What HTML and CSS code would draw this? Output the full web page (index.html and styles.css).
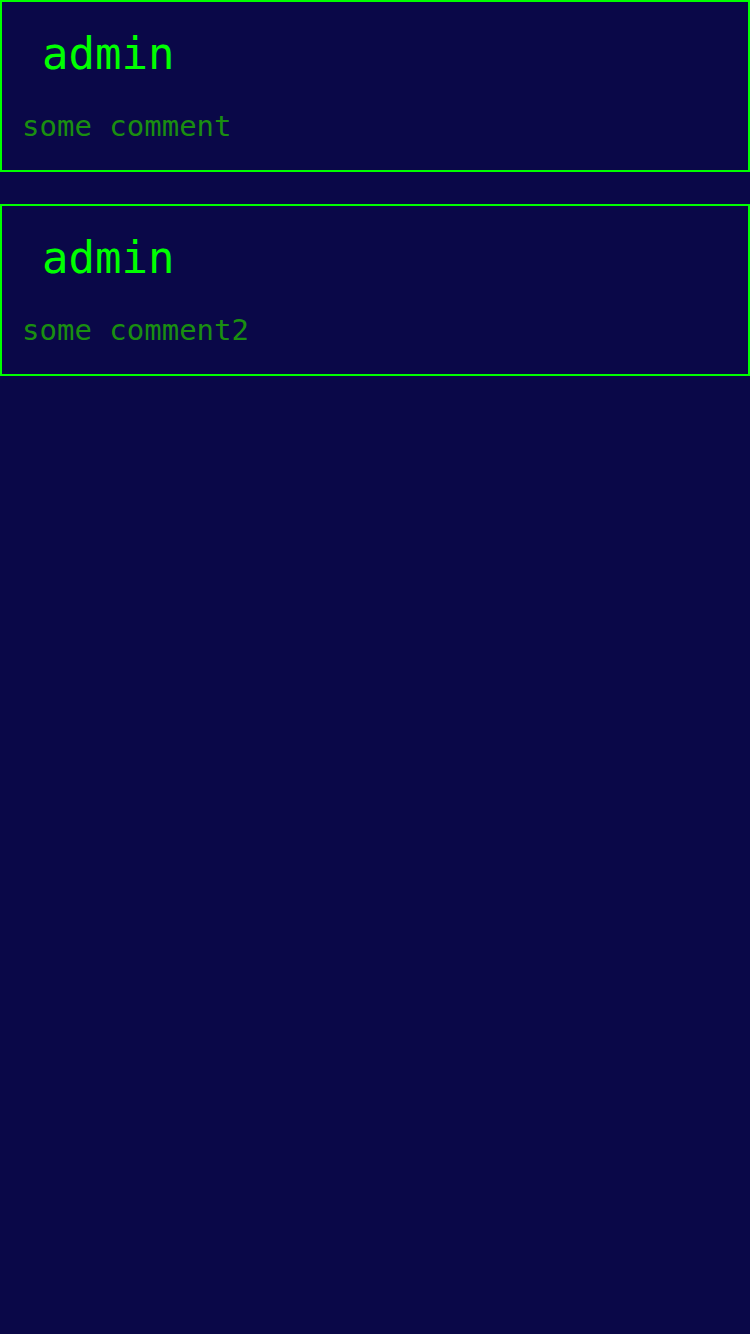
FILE: index.html
```html
<!DOCTYPE html>
<html>
<head>
<meta charset="utf-8">
<link rel="stylesheet" href="styles.css">
</head>
<body>
<div class="list">
  <div class="card">
    <div class="author">admin</div>
    <div class="comment">some comment</div>
  </div>
  <div class="card">
    <div class="author">admin</div>
    <div class="comment">some comment2</div>
  </div>
</div>
</body>
</html>
```
FILE: styles.css
```css
html, body {
  margin: 0;
  padding: 0;
  background: #0a0848;
  min-height: 100%;
}
body {
  font-family: "DejaVu Sans Mono", monospace;
}
.list {
  display: flex;
  flex-direction: column;
  gap: 32px;
}
.card {
  height: 172px;
  box-sizing: border-box;
  border: 2px solid #00ff00;
  padding: 20px 20px 0 20px;
}
.author {
  color: #00ff00;
  font-size: 44px;
  line-height: 64px;
  padding-left: 20px;
}
.comment {
  color: #1a8f10;
  font-size: 29px;
  line-height: 44px;
  margin-top: 18px;
}
```
